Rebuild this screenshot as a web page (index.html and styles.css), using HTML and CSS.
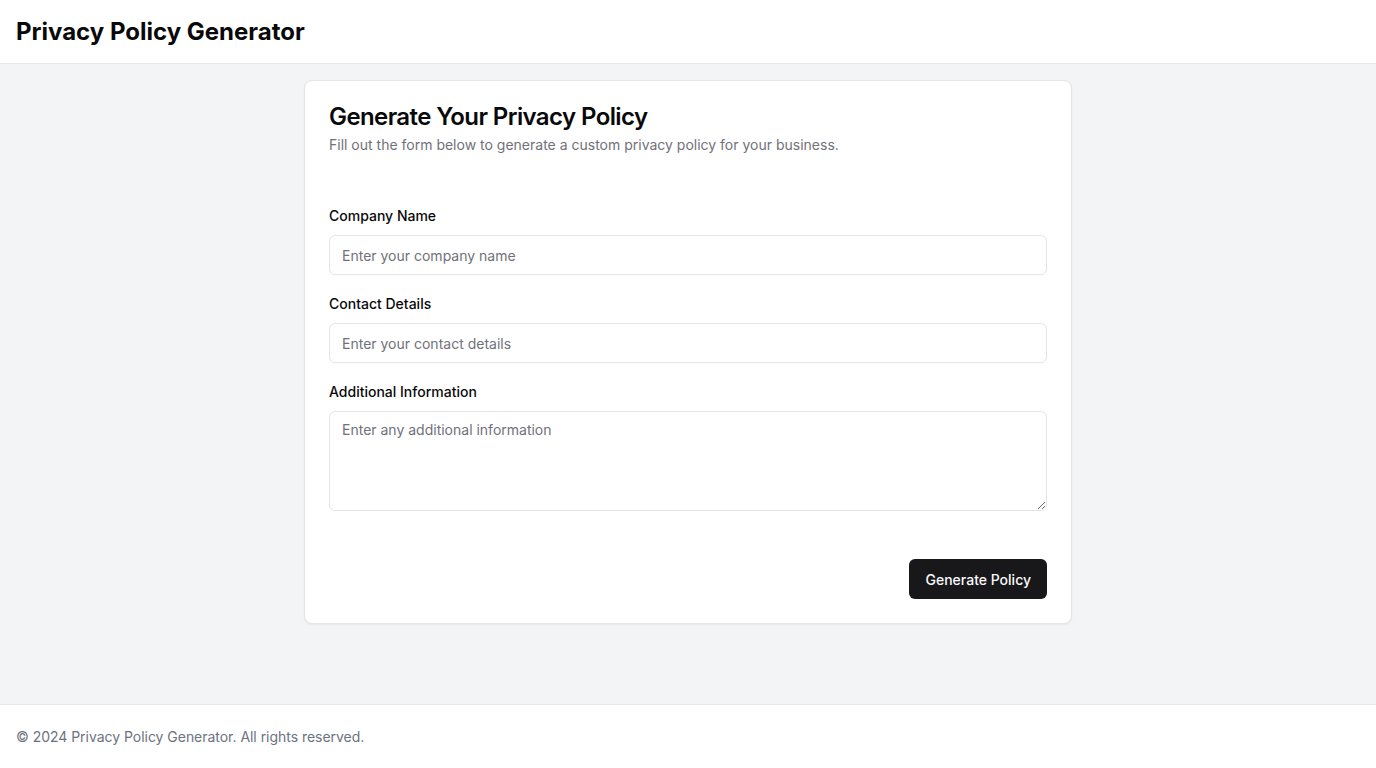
FILE: index.html
```html
<!DOCTYPE html>
<html lang="en">
<head>
<meta charset="utf-8">
<title>Privacy Policy Generator</title>
<link rel="stylesheet" href="styles.css">
</head>
<body>
<div class="page">
  <header class="site-header">
    <h1 class="brand">Privacy Policy Generator</h1>
  </header>
  <main class="main">
    <section class="card">
      <div class="card-header">
        <h2 class="card-title">Generate Your Privacy Policy</h2>
        <p class="card-desc">Fill out the form below to generate a custom privacy policy for your business.</p>
      </div>
      <form class="card-content">
        <div class="field">
          <label class="label" for="company">Company Name</label>
          <input class="input" id="company" type="text" placeholder="Enter your company name">
        </div>
        <div class="field">
          <label class="label" for="contact">Contact Details</label>
          <input class="input" id="contact" type="text" placeholder="Enter your contact details">
        </div>
        <div class="field">
          <label class="label" for="info">Additional Information</label>
          <textarea class="textarea" id="info" placeholder="Enter any additional information"></textarea>
        </div>
      </form>
      <div class="card-footer">
        <button class="btn" type="button">Generate Policy</button>
      </div>
    </section>
  </main>
  <footer class="site-footer">
    <p class="copy">© 2024 Privacy Policy Generator. All rights reserved.</p>
  </footer>
</div>
</body>
</html>
```

FILE: styles.css
```css
* { box-sizing: border-box; }
html, body { margin: 0; padding: 0; }
body {
  font-family: Inter, "Noto Sans", sans-serif;
  color: #09090b;
  background: #ffffff;
}
.page {
  min-height: 100vh;
  display: flex;
  flex-direction: column;
}
.site-header {
  height: 64px;
  border-bottom: 1px solid #e5e7eb;
  background: #fff;
  display: flex;
  align-items: center;
  padding: 0 16px;
}
.brand {
  margin: 0;
  font-size: 24px;
  line-height: 32px;
  font-weight: 700;
}
.main {
  flex: 1;
  background: #f3f4f6;
  padding: 16px;
}
.card {
  max-width: 768px;
  margin: 0 auto;
  background: #fff;
  border: 1px solid #e4e4e7;
  border-radius: 8px;
  box-shadow: 0 1px 2px rgba(0,0,0,0.05);
}
.card-header {
  padding: 24px 24px 24px;
  display: flex;
  flex-direction: column;
  gap: 6px;
}
.card-title {
  margin: 0;
  font-size: 24px;
  line-height: 24px;
  font-weight: 600;
  letter-spacing: -0.6px;
}
.card-desc {
  margin: 0;
  font-size: 14px;
  line-height: 20px;
  color: #71717a;
}
.card-content {
  padding: 27px 24px 0;
  display: flex;
  flex-direction: column;
  gap: 19px;
}
.field {
  display: flex;
  flex-direction: column;
  gap: 9px;
}
.label {
  font-size: 14px;
  line-height: 20px;
  font-weight: 500;
}
.input, .textarea {
  width: 100%;
  border: 1px solid #e4e4e7;
  border-radius: 6px;
  background: #fff;
  font-family: inherit;
  font-size: 14px;
  color: #09090b;
  padding: 8px 12px;
  outline: none;
}
.input { height: 40px; }
.textarea {
  height: 100px;
  line-height: 20px;
  resize: vertical;
  display: block;
}
.input::placeholder, .textarea::placeholder { color: #71717a; }
.card-footer {
  padding: 48px 24px 24px;
  display: flex;
  justify-content: flex-end;
}
.btn {
  height: 40px;
  padding: 0 16px 0 17px;
  background: #18181b;
  color: #fafafa;
  border: none;
  border-radius: 6px;
  font-family: inherit;
  font-size: 14px;
  font-weight: 500;
}
.site-footer {
  height: 64px;
  border-top: 1px solid #e5e7eb;
  background: #fff;
  display: flex;
  align-items: center;
  padding: 0 16px;
}
.copy {
  margin: 0;
  font-size: 14px;
  line-height: 20px;
  color: #6b7280;
  letter-spacing: -0.03px;
}
```
